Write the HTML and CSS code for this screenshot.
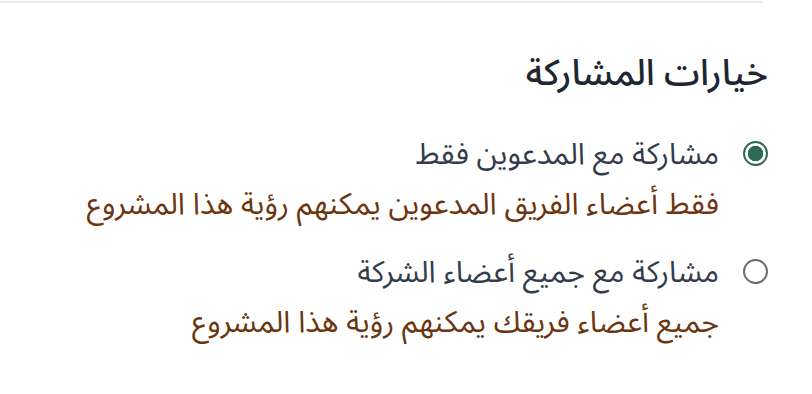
FILE: index.html
```html
<!DOCTYPE html>
<html lang="ar" dir="rtl">
<head>
  <meta charset="UTF-8" />
  <meta name="viewport" content="width=device-width, initial-scale=1.0"/>
  <title>خيارات المشاركة</title>
  <link rel="stylesheet" href="styles.css">
</head>
<body>
  <div class="top-rule"></div>
  <section class="share-options">
    <h2>خيارات المشاركة</h2>
    <label class="option">
      <input type="radio" name="share" checked />
      <span class="option-text">
        <span class="option-title">مشاركة مع المدعوين فقط</span>
        <span class="option-desc">فقط أعضاء الفريق المدعوين يمكنهم رؤية هذا المشروع</span>
      </span>
    </label>
    <label class="option">
      <input type="radio" name="share" />
      <span class="option-text">
        <span class="option-title">مشاركة مع جميع أعضاء الشركة</span>
        <span class="option-desc">جميع أعضاء فريقك يمكنهم رؤية هذا المشروع</span>
      </span>
    </label>
  </section>
</body>
</html>
```

FILE: styles.css
```css
body {
  font-family: "Noto Sans Arabic", "Noto Sans", sans-serif;
  background: #fff;
  margin: 0;
}
.top-rule {
  height: 2px;
  background: #e8e8e8;
  margin: 1px 50px 0 0;
}
.share-options {
  padding: 51px 44px 0 0;
}
h2 {
  margin: 0 0 39px;
  font-size: 36px;
  font-weight: 500;
  line-height: 40px;
  color: #1f2633;
}
.option {
  display: flex;
  align-items: flex-start;
  gap: 24px;
  margin-bottom: 24px;
}
.option input {
  appearance: none;
  -webkit-appearance: none;
  box-sizing: border-box;
  width: 25px;
  height: 25px;
  margin: 8px 0 0;
  border: 2px solid #6d6d6d;
  border-radius: 50%;
  flex-shrink: 0;
}
.option input:checked {
  border-color: #2d6a55;
  background: radial-gradient(circle, #2d6a55 0 7.5px, #fff 8px);
}
.option-text { display: flex; flex-direction: column; gap: 6px; line-height: 44px; }
.option-title { font-size: 30px; color: #343c4c; }
.option-desc { font-size: 30px; color: #6b3510; }
```
